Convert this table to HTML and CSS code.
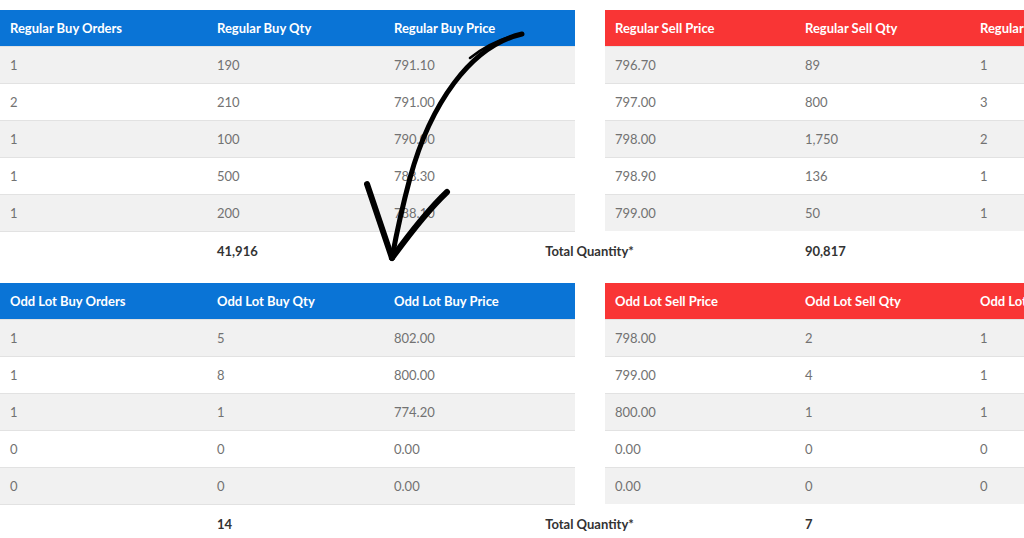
FILE: index.html
```html
<!DOCTYPE html>
<html lang="en">
<head>
  <meta charset="UTF-8" />
  <meta name="viewport" content="width=device-width, initial-scale=1.0" />
  <title>Order Book</title>
  <link rel="stylesheet" href="styles.css">
</head>
<body>
  <div class="page">

    <div class="book">
      <div class="tables">
        <div class="grid buy">
          <div class="head">Regular Buy Orders</div><div class="head">Regular Buy Qty</div><div class="head">Regular Buy Price</div>
          <div class="cell">1</div><div class="cell">190</div><div class="cell">791.10</div>
          <div class="cell">2</div><div class="cell">210</div><div class="cell">791.00</div>
          <div class="cell">1</div><div class="cell">100</div><div class="cell">790.00</div>
          <div class="cell">1</div><div class="cell">500</div><div class="cell">788.30</div>
          <div class="cell">1</div><div class="cell">200</div><div class="cell">788.10</div>
        </div>
        <div class="grid sell">
          <div class="head">Regular Sell Price</div><div class="head">Regular Sell Qty</div><div class="head">Regular Sell Orders</div>
          <div class="cell">796.70</div><div class="cell">89</div><div class="cell">1</div>
          <div class="cell">797.00</div><div class="cell">800</div><div class="cell">3</div>
          <div class="cell">798.00</div><div class="cell">1,750</div><div class="cell">2</div>
          <div class="cell">798.90</div><div class="cell">136</div><div class="cell">1</div>
          <div class="cell">799.00</div><div class="cell">50</div><div class="cell">1</div>
        </div>
      </div>
      <div class="totals">
        <div class="total buy-qty">41,916</div>
        <div class="total label">Total Quantity*</div>
        <div class="total sell-qty">90,817</div>
      </div>
    </div>

    <div class="book">
      <div class="tables">
        <div class="grid buy">
          <div class="head">Odd Lot Buy Orders</div><div class="head">Odd Lot Buy Qty</div><div class="head">Odd Lot Buy Price</div>
          <div class="cell">1</div><div class="cell">5</div><div class="cell">802.00</div>
          <div class="cell">1</div><div class="cell">8</div><div class="cell">800.00</div>
          <div class="cell">1</div><div class="cell">1</div><div class="cell">774.20</div>
          <div class="cell">0</div><div class="cell">0</div><div class="cell">0.00</div>
          <div class="cell">0</div><div class="cell">0</div><div class="cell">0.00</div>
        </div>
        <div class="grid sell">
          <div class="head">Odd Lot Sell Price</div><div class="head">Odd Lot Sell Qty</div><div class="head">Odd Lot Sell Orders</div>
          <div class="cell">798.00</div><div class="cell">2</div><div class="cell">1</div>
          <div class="cell">799.00</div><div class="cell">4</div><div class="cell">1</div>
          <div class="cell">800.00</div><div class="cell">1</div><div class="cell">1</div>
          <div class="cell">0.00</div><div class="cell">0</div><div class="cell">0</div>
          <div class="cell">0.00</div><div class="cell">0</div><div class="cell">0</div>
        </div>
      </div>
      <div class="totals">
        <div class="total buy-qty">14</div>
        <div class="total label">Total Quantity*</div>
        <div class="total sell-qty">7</div>
      </div>
    </div>

    <svg class="arrow" width="1024" height="538" viewBox="0 0 1024 538">
      <path d="M522 34 C470 46 430 105 410 178 C402 208 396 236 392 258" fill="none" stroke="#000" stroke-width="5" stroke-linecap="round"/>
      <path d="M522 34 C500 38 485 46 470 58" fill="none" stroke="#000" stroke-width="2.5" stroke-linecap="round"/>
      <path d="M367 184 C376 210 384 235 392 258" fill="none" stroke="#000" stroke-width="6" stroke-linecap="round"/>
      <path d="M447 192 C428 210 408 236 392 258" fill="none" stroke="#000" stroke-width="6" stroke-linecap="round"/>
    </svg>
  </div>
</body>
</html>
```

FILE: styles.css
```css
html, body {
  margin: 0;
  padding: 0;
  overflow: hidden;
  background-color: #ffffff;
}
body {
  font-family: Lato, "Liberation Sans", sans-serif;
  font-size: 13px;
  color: #727272;
}
.page {
  position: relative;
  width: 1200px;
  padding-top: 10px;
}
.book {
  margin-bottom: 14px;
}
.tables {
  display: flex;
  gap: 30px;
}
.grid {
  display: grid;
  width: 575px;
  grid-template-rows: 36px;
  grid-auto-rows: 37px;
}
.buy {
  grid-template-columns: 207px 177px 191px;
}
.sell {
  grid-template-columns: 190px 175px 210px;
}
.head {
  display: flex;
  align-items: center;
  padding: 0 10px;
  color: #ffffff;
  font-weight: bold;
}
.buy .head {
  background-color: #0a74d6;
}
.sell .head {
  background-color: #f93535;
}
.cell {
  display: flex;
  align-items: center;
  padding: 0 10px;
  border-top: 1px solid #e2e2e2;
}
/* odd rows grey */
.cell:nth-child(6n+4),
.cell:nth-child(6n+5),
.cell:nth-child(6n+6) {
  background-color: #f1f1f1;
}
.totals {
  display: grid;
  grid-template-columns: 207px 177px 191px 30px 190px 175px 210px;
  height: 37px;
  border-top: 1px solid #e2e2e2;
  width: 575px;
}
.total {
  display: flex;
  align-items: center;
  padding: 0 10px;
  font-weight: bold;
  color: #333333;
  white-space: nowrap;
}
.buy-qty {
  grid-column: 2;
}
.label {
  grid-column: 3 / 6;
  justify-content: center;
  padding-left: 0;
  padding-right: 0;
}
.sell-qty {
  grid-column: 6;
}
.arrow {
  position: absolute;
  left: 0;
  top: 0;
  pointer-events: none;
}
```
